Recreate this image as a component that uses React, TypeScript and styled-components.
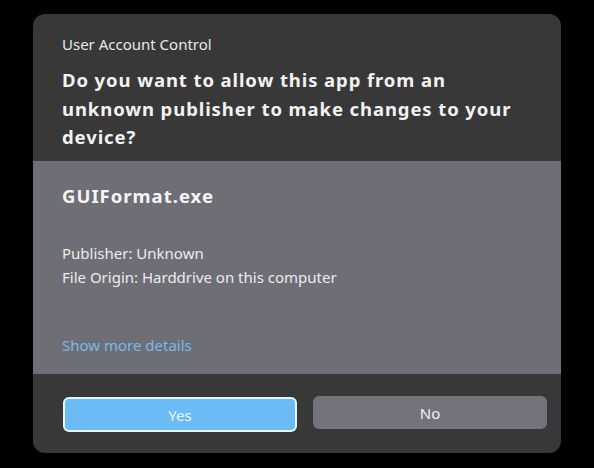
import styled, { createGlobalStyle } from 'styled-components';

const GlobalStyle = createGlobalStyle`
  html, body {
    margin: 0;
    padding: 0;
    background: #000;
  }
  body {
    font-family: 'Noto Sans', 'Open Sans', sans-serif;
  }
`;

const App = () => {
  return (
    <>
      <GlobalStyle />
      <Page>
        <Dialog>
          <Header>
            <Caption>User Account Control</Caption>
            <Question>
              Do you want to allow this app from an unknown publisher to make changes to your
              device?
            </Question>
          </Header>

          <Details>
            <AppName>GUIFormat.exe</AppName>
            <InfoList>
              <InfoLine>Publisher: Unknown</InfoLine>
              <InfoLine>File Origin: Harddrive on this computer</InfoLine>
            </InfoList>
            <MoreLink>Show more details</MoreLink>
          </Details>

          <Footer>
            <Button $primary>Yes</Button>
            <Button>No</Button>
          </Footer>
        </Dialog>
      </Page>
    </>
  );
};

export default App;

// Styled components
const Page = styled.div`
  width: 594px;
  height: 468px;
  padding: 14px 0 0 33px;
  box-sizing: border-box;
`;

const Dialog = styled.div`
  width: 528px;
  height: 439px;
  background-color: #383838;
  border-radius: 12px;
  overflow: hidden;
  display: flex;
  flex-direction: column;
`;

const Header = styled.div`
  height: 147px;
  box-sizing: border-box;
  padding: 20px 20px 0 29px;
`;

const Caption = styled.div`
  font-size: 15px;
  line-height: 21px;
  color: #e8e8e8;
`;

const Question = styled.h1`
  margin: 11px 0 0;
  font-size: 18.5px;
  line-height: 28.5px;
  font-weight: 700;
  letter-spacing: 0.9px;
  color: #f2f2f2;
`;

const Details = styled.div`
  height: 213px;
  box-sizing: border-box;
  padding: 22px 29px 0;
  background-color: #6e6e76;
  display: flex;
  flex-direction: column;
`;

const AppName = styled.div`
  font-size: 18.5px;
  line-height: 26px;
  font-weight: 700;
  letter-spacing: 1px;
  color: #f5f5f5;
`;

const InfoList = styled.div`
  margin-top: 32px;
  display: flex;
  flex-direction: column;
`;

const InfoLine = styled.div`
  font-size: 15px;
  line-height: 24px;
  color: #ececec;
`;

const MoreLink = styled.a`
  margin-top: 46px;
  font-size: 15px;
  line-height: 20px;
  color: #7ab8e8;
  cursor: pointer;
`;

const Footer = styled.div`
  flex: 1;
  display: flex;
  gap: 16px;
  padding: 22px 14px 0 30px;
  box-sizing: border-box;
`;

const Button = styled.button<{ $primary?: boolean }>`
  width: 234px;
  height: ${props => (props.$primary ? '35px' : '33px')};
  box-sizing: border-box;
  margin-top: ${props => (props.$primary ? '1px' : '0')};
  border-radius: 6px;
  border: ${props => (props.$primary ? '2px solid #e6f6ff' : 'none')};
  background-color: ${props => (props.$primary ? '#6bbcf6' : '#73737b')};
  color: ${props => (props.$primary ? '#eef7ff' : '#f2f2f2')};
  font-family: 'Noto Sans', 'Open Sans', sans-serif;
  font-size: 15px;
  cursor: pointer;
`;
